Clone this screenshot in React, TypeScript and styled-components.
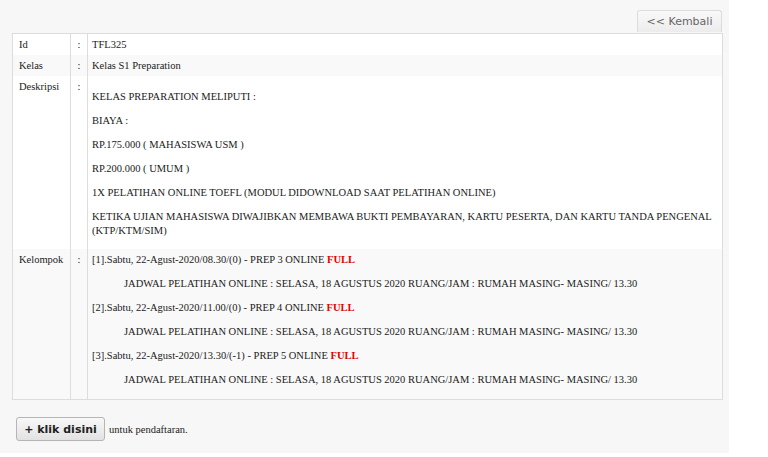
import styled, { createGlobalStyle } from "styled-components";

const GlobalStyle = createGlobalStyle`
  body {
    margin: 0;
    background: #ffffff;
  }
`;

const serif = `"Liberation Serif", "DejaVu Serif", serif`;

const groups = [
  { label: "[1].Sabtu, 22-Agust-2020/08.30/(0) - PREP 3 ONLINE" },
  { label: "[2].Sabtu, 22-Agust-2020/11.00/(0) - PREP 4 ONLINE" },
  { label: "[3].Sabtu, 22-Agust-2020/13.30/(-1) - PREP 5 ONLINE" },
];

const jadwal =
  "JADWAL PELATIHAN ONLINE : SELASA, 18 AGUSTUS 2020 RUANG/JAM : RUMAH MASING- MASING/ 13.30";

const App = () => {
  return (
    <>
      <GlobalStyle />
      <Panel>
        <TopBar>
          <BackButton>&lt;&lt; Kembali</BackButton>
        </TopBar>
        <DetailTable>
          <tbody>
            <Row>
              <LabelCell>Id</LabelCell>
              <ColonCell>:</ColonCell>
              <ValueCell>TFL325</ValueCell>
            </Row>
            <Row striped>
              <LabelCell>Kelas</LabelCell>
              <ColonCell>:</ColonCell>
              <ValueCell>Kelas S1 Preparation</ValueCell>
            </Row>
            <Row>
              <LabelCell>Deskripsi</LabelCell>
              <ColonCell>:</ColonCell>
              <ValueCell>
                <Para>KELAS PREPARATION MELIPUTI :</Para>
                <Para>BIAYA :</Para>
                <Para>RP.175.000 ( MAHASISWA USM )</Para>
                <Para>RP.200.000 ( UMUM )</Para>
                <Para>1X PELATIHAN ONLINE TOEFL (MODUL DIDOWNLOAD SAAT PELATIHAN ONLINE)</Para>
                <Para>
                  KETIKA UJIAN MAHASISWA DIWAJIBKAN MEMBAWA BUKTI PEMBAYARAN, KARTU PESERTA, DAN
                  KARTU TANDA PENGENAL (KTP/KTM/SIM)
                </Para>
              </ValueCell>
            </Row>
            <Row striped>
              <LabelCell>Kelompok</LabelCell>
              <ColonCell>:</ColonCell>
              <ValueCell>
                {groups.map((g) => (
                  <Group key={g.label}>
                    <GroupLine>
                      {g.label} <Full>FULL</Full>
                    </GroupLine>
                    <Schedule>{jadwal}</Schedule>
                  </Group>
                ))}
              </ValueCell>
            </Row>
          </tbody>
        </DetailTable>
        <Footer>
          <AddButton>+ klik disini</AddButton>
          <FooterText>untuk pendaftaran.</FooterText>
        </Footer>
      </Panel>
    </>
  );
};

const Panel = styled.div`
  width: 729px;
  background: #f7f7f7;
  padding: 10px 0 12px 0;
  box-sizing: border-box;
  color: #1a1a1a;
  font-family: ${serif};
  font-size: 10.5px;
`;

const TopBar = styled.div`
  display: flex;
  justify-content: flex-end;
  padding-right: 7px;
`;

const BackButton = styled.button`
  display: block;
  width: 85px;
  height: 22px;
  font-family: "DejaVu Sans", Verdana, sans-serif;
  font-size: 11px;
  color: #666;
  background: linear-gradient(#f9f9f9, #ececec);
  border: 1px solid #dcdcdc;
  border-bottom: none;
  border-radius: 3px 3px 0 0;
  padding: 0;
`;

const DetailTable = styled.table`
  margin: 1px 0 0 12px;
  width: 711px;
  table-layout: fixed;
  border-collapse: collapse;
  background: #fff;
  border: 1px solid #dddddd;
`;

const Row = styled.tr<{ striped?: boolean }>`
  background: ${(p) => (p.striped ? "#f9f9f9" : "#ffffff")};
  vertical-align: top;
`;

const Cell = styled.td`
  padding: 4px 6px 3px 6px;
  line-height: 14px;
  border-left: 1px solid #dddddd;
  font-family: ${serif};
  font-size: 10.5px;
  color: #1a1a1a;
`;

const LabelCell = styled(Cell)`
  width: 45px;
  border-left: none;
`;

const ColonCell = styled(Cell)`
  width: 16px;
  padding: 4px 0 3px 0;
  text-align: center;
`;

const ValueCell = styled(Cell)`
  padding: 4px 6px 3px 4px;
`;

const Para = styled.p`
  margin: 10px 0;

  &:last-child {
    margin-bottom: 8px;
  }
`;

const Group = styled.div`
  &:last-child p {
    margin-bottom: 9px;
  }
`;

const GroupLine = styled.div`
  margin-bottom: 10px;
`;

const Schedule = styled.p`
  margin: 0 0 10px 0;
  padding-left: 32px;
`;

const Full = styled.b`
  color: #e00000;
`;

const Footer = styled.div`
  display: flex;
  align-items: center;
  gap: 4px;
  margin: 17px 0 0 16px;
`;

const AddButton = styled.button`
  width: 89px;
  height: 24px;
  font-family: "DejaVu Sans", Verdana, sans-serif;
  font-size: 11px;
  font-weight: bold;
  color: #222;
  background: linear-gradient(#f8f8f8, #e2e2e2);
  border: 1px solid #b5b5b5;
  border-radius: 3px;
  padding: 0;
`;

const FooterText = styled.span`
  font-family: ${serif};
  font-size: 10.5px;
  color: #1a1a1a;
`;

export default App;
